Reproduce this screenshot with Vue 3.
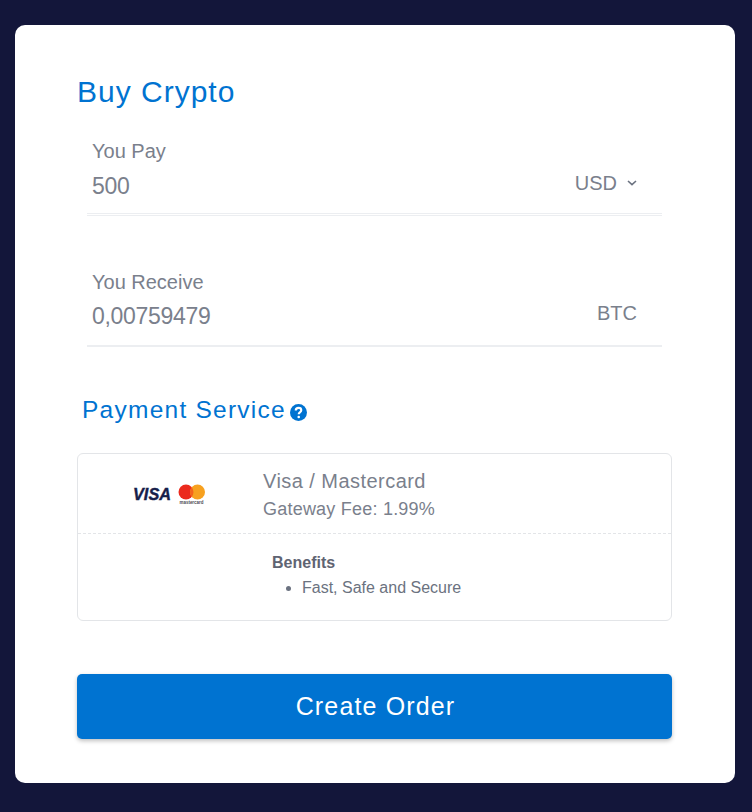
<script setup>
const benefits = ['Fast, Safe and Secure']
</script>

<template>
  <main class="page">
    <section class="card">
      <h1 class="title">Buy Crypto</h1>

      <div class="field pay">
        <label class="label">You Pay</label>
        <div class="row row-pay">
          <span class="amount">500</span>
          <span class="unit">USD
            <svg class="chev" viewBox="0 0 10 6" width="10" height="6" aria-hidden="true">
              <path d="M1 1l4 3.6L9 1" fill="none" stroke="#6b7280" stroke-width="1.6" />
            </svg>
          </span>
        </div>
      </div>

      <div class="field receive">
        <label class="label">You Receive</label>
        <div class="row">
          <span class="amount">0,00759479</span>
          <span class="unit">BTC</span>
        </div>
      </div>

      <h2 class="subtitle">Payment Service
        <svg class="help" viewBox="0 0 16 16" width="17" height="17" aria-hidden="true">
          <circle cx="8" cy="8" r="8" fill="#0073d1" />
          <path d="M5.400 6.200c0-1.500 1.200-2.500 2.700-2.500s2.500.9 2.500 2.200c0 2-2.400 1.900-2.400 3.700" fill="none" stroke="#fff" stroke-width="2" />
          <circle cx="8.200" cy="12.300" r="1.200" fill="#fff" />
        </svg>
      </h2>

      <div class="service">
        <div class="service-top">
          <div class="logos">
            <svg viewBox="0 0 74 22" width="74" height="22" aria-hidden="true">
              <text class="visa" x="1" y="15.500" textLength="38" lengthAdjust="spacingAndGlyphs">VISA</text>
              <circle cx="54" cy="8" r="7.500" fill="#eb2a1d" />
              <circle cx="65.500" cy="8" r="7.500" fill="#f7a11f" />
              <path d="M59.750 3.200a7.500 7.500 0 0 1 0 9.600a7.500 7.500 0 0 1 0-9.600z" fill="#f4631b" />
              <text class="mc" x="47.500" y="20" textLength="24" lengthAdjust="spacingAndGlyphs">mastercard</text>
            </svg>
          </div>
          <div class="service-info">
            <div class="service-name">Visa / Mastercard</div>
            <div class="service-fee">Gateway Fee: 1.99%</div>
          </div>
        </div>
        <div class="service-bottom">
          <div class="benefits">
            <strong class="benefits-title">Benefits</strong>
            <ul class="benefits-list">
              <li v-for="b in benefits" :key="b">{{ b }}</li>
            </ul>
          </div>
        </div>
      </div>

      <button class="submit" type="button">Create Order</button>
    </section>
  </main>
</template>

<style scoped>
.page {
  box-sizing: border-box;
  width: 752px;
  height: 812px;
  padding: 25px 17px 29px 15px;
  background: #13163a;
  font-family: "Liberation Sans", Arial, sans-serif;
  color: #6b7280;
}
.card {
  box-sizing: border-box;
  height: 758px;
  padding: 50px 63px 0 62px;
  background: #fff;
  border-radius: 10px;
}
.title {
  margin: 0;
  font-size: 30px;
  line-height: 34px;
  font-weight: 400;
  letter-spacing: 1px;
  color: #0073d1;
}
.field {
  margin: 0 10px;
  padding: 0 25px 0 5px;
}
.pay {
  margin-top: 30px;
  height: 74px;
  border-bottom: 3px double #eceef1;
}
.receive {
  margin-top: 54px;
  height: 77px;
  border-bottom: 2px solid #eceef1;
  box-sizing: border-box;
}
.label {
  display: block;
  font-size: 20px;
  line-height: 24px;
  color: #7a808c;
}
.row {
  display: flex;
  justify-content: space-between;
  align-items: flex-start;
  margin-top: 9px;
}
.row-pay {
  margin-top: 10px;
}
.amount {
  font-size: 23px;
  line-height: 27px;
  letter-spacing: -0.3px;
  color: #7a808c;
}
.unit {
  display: inline-flex;
  align-items: center;
  gap: 10px;
  margin-top: -2px;
  font-size: 20px;
  line-height: 24px;
  color: #7a808c;
}
.subtitle {
  margin: 49px 0 0 5px;
  display: flex;
  align-items: center;
  gap: 4px;
  font-size: 24.5px;
  line-height: 28px;
  font-weight: 400;
  letter-spacing: 1.25px;
  color: #0073d1;
}
.help {
  margin-top: 5px;
}
.service {
  margin-top: 29px;
  height: 168px;
  box-sizing: border-box;
  border: 1px solid #e3e5e8;
  border-radius: 6px;
}
.service-top {
  display: flex;
  height: 79px;
  border-bottom: 1px dashed #e3e5e8;
}
.logos {
  width: 185px;
  padding: 30px 0 0 54px;
  box-sizing: border-box;
}
.visa {
  font-family: "Liberation Sans", Arial, sans-serif;
  font-size: 17px;
  font-weight: 700;
  font-style: italic;
  fill: #16204a;
  stroke: #16204a;
  stroke-width: 0.4px;
}
.mc {
  font-family: "Liberation Sans", Arial, sans-serif;
  font-size: 4.500px;
  font-weight: 700;
  fill: #4a4a55;
}
.service-info {
  padding-top: 14px;
}
.service-name {
  font-size: 20px;
  line-height: 26px;
  letter-spacing: 0.45px;
  color: #7a808c;
}
.service-fee {
  font-size: 18px;
  line-height: 24px;
  margin-top: 3px;
  letter-spacing: 0.22px;
  color: #7a808c;
}
.service-bottom {
  padding: 19px 0 0 194px;
}
.benefits-title {
  display: block;
  font-size: 16px;
  line-height: 20px;
  color: #5f6472;
}
.benefits-list {
  margin: 3px 0 0;
  padding: 0 0 0 30px;
  font-size: 16px;
  line-height: 24px;
  color: #6b7280;
}
.submit {
  display: block;
  width: 595px;
  height: 65px;
  margin-top: 53px;
  padding: 0 0 0 2px;
  border: 0;
  border-radius: 5px;
  background: #0073d1;
  color: #fff;
  font-family: inherit;
  font-size: 25px;
  letter-spacing: 1.15px;
  box-shadow: 0 2px 4px rgba(0, 0, 0, 0.25);
}
</style>
